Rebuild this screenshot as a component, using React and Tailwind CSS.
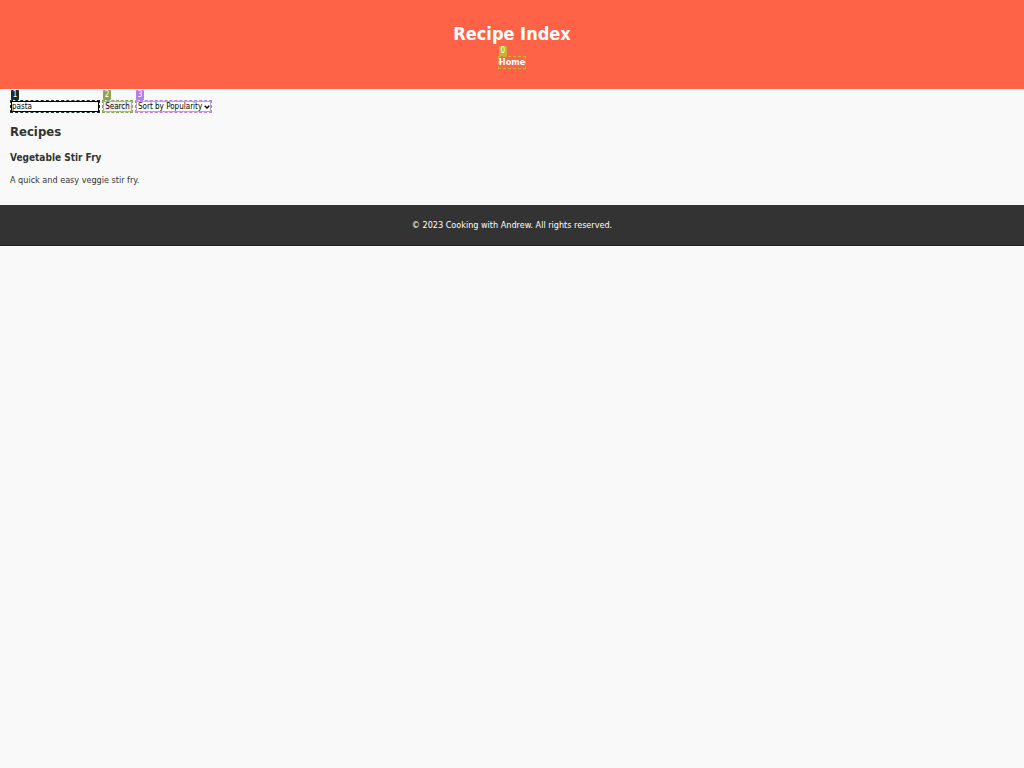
function Marker({ className, children }) {
  return (
    <span
      aria-hidden="true"
      className={`absolute -top-[11px] left-0 h-2.5 w-2 rounded-[1px] text-center text-[8px] leading-[10px] font-normal text-white ${className}`}
    >
      {children}
    </span>
  );
}

export default function App() {
  return (
    <div className="min-h-screen bg-[#f9f9f9] font-['DejaVu_Sans_Condensed','DejaVu_Sans',sans-serif] text-[9px] text-[#333333]">
      <header className="flex flex-col items-center bg-[#ff6347] py-5 text-white">
        <h1 className="text-[18px] leading-7 font-bold">Recipe Index</h1>
        <nav className="pt-2">
          <a
            href="#home"
            className="relative block border border-dashed border-[#c8b432] leading-[11px] font-bold"
          >
            <Marker className="bg-[#c0b830]">0</Marker>
            Home
          </a>
        </nav>
      </header>
      <main className="px-2.5 pt-[11px] pb-4">
        <form className="flex gap-[2px]" onSubmit={(e) => e.preventDefault()}>
          <div className="relative border border-dashed border-[#182e2d]">
            <Marker className="bg-[#182e2d]">1</Marker>
            <input
              type="text"
              aria-label="Search recipes"
              defaultValue="pasta"
              className="block h-[11px] w-[88px] border border-black bg-white text-[8px] leading-[9px] text-black outline-none"
            />
          </div>
          <div className="relative border border-dashed border-[#8ba458]">
            <Marker className="bg-[#8ba458]">2</Marker>
            <button
              type="submit"
              className="block h-[11px] w-[29px] border border-[#b0b0a8] bg-[#efefef] text-[8px] leading-[9px] text-black"
            >
              Search
            </button>
          </div>
          <div className="relative border border-dashed border-[#b97bf0]">
            <Marker className="bg-[#b97bf0]">3</Marker>
            <select
              aria-label="Sort recipes"
              className="block h-[11px] w-[75px] appearance-none border border-[#b9a5cc] bg-white pl-px text-[8px] leading-[9px] text-black"
            >
              <option>Sort by Popularity</option>
            </select>
            <svg
              viewBox="0 0 6 4"
              className="pointer-events-none absolute top-1 right-px h-1 w-1.5"
              fill="none"
              stroke="#000"
              strokeWidth="1.4"
            >
              <path d="M.7.7 3 3 5.3.7" />
            </svg>
          </div>
        </form>
        <h2 className="mt-[9px] text-[13px] leading-5 font-bold">Recipes</h2>
        <h3 className="mt-2 text-[10px] leading-4 font-bold">Vegetable Stir Fry</h3>
        <p className="mt-1.5 pb-px leading-4">A quick and easy veggie stir fry.</p>
      </main>
      <footer className="border-b border-[#222222] bg-[#333333] py-3 text-center text-white">
        <p className="leading-4">© 2023 Cooking with Andrew. All rights reserved.</p>
      </footer>
    </div>
  );
}
